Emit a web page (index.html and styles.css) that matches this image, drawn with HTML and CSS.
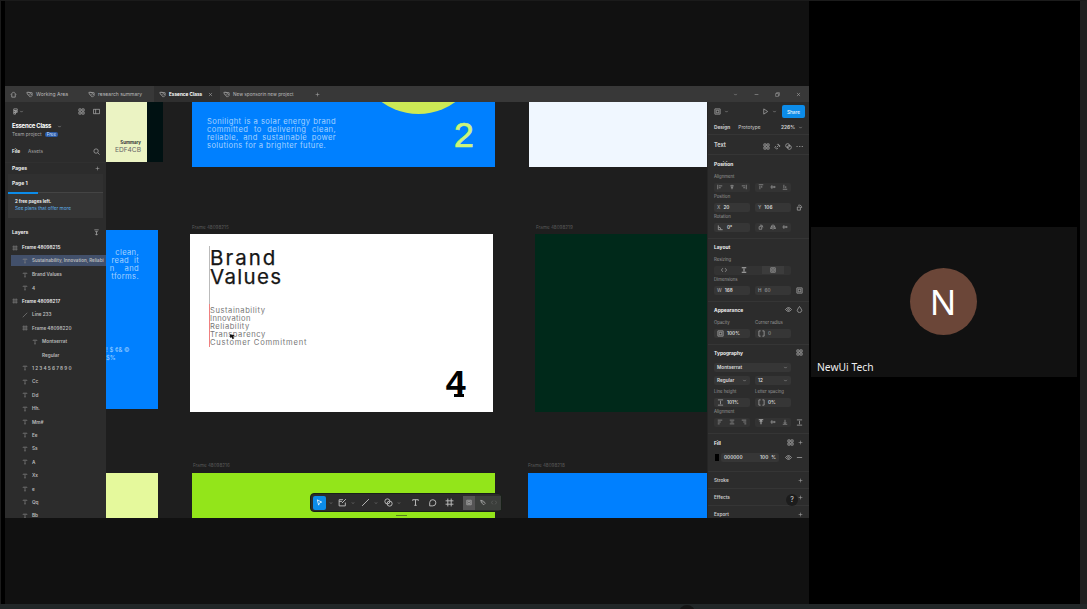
FILE: index.html
```html
<!DOCTYPE html>
<html lang="en">
<head>
    <meta charset="UTF-8">
    <meta name="viewport" content="width=device-width, initial-scale=1.0">
    <title>Essence Class</title>
    <link rel="stylesheet" href="styles.css">
</head>
<body>
<!-- Icon set -->
<svg class="sprite" viewBox="0 0 16 16">
    <symbol id="home" viewBox="0 0 16 16"><path d="M2 8l6-6 6 6M4 7v7h8V7"/></symbol>
    <symbol id="file" viewBox="0 0 16 16"><path d="M2 3h5l7 7-4 4-7-7zM6 3l8 1v5M6 7l3 3"/></symbol>
    <symbol id="figma" viewBox="0 0 16 16"><path d="M4 2h8v4H4zM4 6h4v4H4zM4 10h4v4H4zM9 7h3v3H9z"/></symbol>
    <symbol id="down" viewBox="0 0 16 16"><path d="M4 6l4 4 4-4"/></symbol>
    <symbol id="plus" viewBox="0 0 16 16"><path d="M8 2v12M2 8h12"/></symbol>
    <symbol id="minus" viewBox="0 0 16 16"><path d="M2 8h12"/></symbol>
    <symbol id="close" viewBox="0 0 16 16"><path d="M3 3l10 10M13 3L3 13"/></symbol>
    <symbol id="window" viewBox="0 0 16 16"><path d="M2 5h9v9H2zM5 5V2h9v9h-3"/></symbol>
    <symbol id="grid" viewBox="0 0 16 16"><path d="M2 2h5v5H2zM9 2h5v5H9zM2 9h5v5H2zM9 9h5v5H9z"/></symbol>
    <symbol id="panel" viewBox="0 0 16 16"><path d="M1 3h14v10H1zM6 3v10"/></symbol>
    <symbol id="search" viewBox="0 0 16 16"><circle cx="7" cy="7" r="5"/><path d="M11 11l4 4"/></symbol>
    <symbol id="collapse" viewBox="0 0 16 16"><path d="M3 2h10M5 6h6M8 6v8M5 11l3 3 3-3"/></symbol>
    <symbol id="frame" viewBox="0 0 16 16"><path d="M5 1v14M11 1v14M1 5h14M1 11h14"/></symbol>
    <symbol id="text" viewBox="0 0 16 16"><path d="M3 5V3h10v2M8 3v10M6 13h4"/></symbol>
    <symbol id="line" viewBox="0 0 16 16"><path d="M2 14L14 2"/></symbol>
    <symbol id="link" viewBox="0 0 16 16"><path d="M6 10l5-5M7 4l2-2 5 5-3 2M9 12l-3 2-4-4 2-3"/></symbol>
    <symbol id="play" viewBox="0 0 16 16"><path d="M4 2l9 6-9 6z"/></symbol>
    <symbol id="cursor" viewBox="0 0 16 16"><path d="M3 2l10 5-5 2-2 5z"/></symbol>
    <symbol id="shape" viewBox="0 0 16 16"><path d="M9 3H2v11h11V8M2 6h5M7 9l7-7"/></symbol>
    <symbol id="pen" viewBox="0 0 16 16"><path d="M2 2l7 2 5 6-4 4-6-5zM2 2l7 7"/></symbol>
    <symbol id="blend" viewBox="0 0 16 16"><circle cx="6" cy="6" r="4.500"/><circle cx="10" cy="10" r="4.500"/></symbol>
    <symbol id="comment" viewBox="0 0 16 16"><path d="M3 14V8a5.500 5.500 0 1 1 5.500 6z"/></symbol>
    <symbol id="eye" viewBox="0 0 16 16"><path d="M1 8q7-9 14 0q-7 9-14 0z"/><circle cx="8" cy="8" r="2"/></symbol>
    <symbol id="drop" viewBox="0 0 16 16"><path d="M8 1l4 6a5 5 0 1 1-8 0z"/></symbol>
    <symbol id="left" viewBox="0 0 16 16"><path d="M2 3h12M2 8h8M2 13h5"/></symbol>
    <symbol id="center" viewBox="0 0 16 16"><path d="M2 3h12M4 8h8M2 13h12"/></symbol>
    <symbol id="right" viewBox="0 0 16 16"><path d="M2 3h12M6 8h8M9 13h5"/></symbol>
    <symbol id="al-l" viewBox="0 0 16 16"><path d="M2 2v12M5 5h9M5 10h5"/></symbol>
    <symbol id="al-c" viewBox="0 0 16 16"><path d="M8 2v12M3 5h10M5 10h6"/></symbol>
    <symbol id="al-r" viewBox="0 0 16 16"><path d="M14 2v12M2 5h9M6 10h5"/></symbol>
    <symbol id="al-t" viewBox="0 0 16 16"><path d="M2 2h12M5 5v9M10 5v5"/></symbol>
    <symbol id="al-m" viewBox="0 0 16 16"><path d="M1 8h14M5 3v10M11 5v6"/></symbol>
    <symbol id="al-b" viewBox="0 0 16 16"><path d="M2 14h12M5 2v9M10 6v5"/></symbol>
    <symbol id="angle" viewBox="0 0 16 16"><path d="M3 3v10h10M3 7q6 0 6 6"/></symbol>
    <symbol id="flip" viewBox="0 0 16 16"><path d="M8 1v14M5 4v8H1zM11 4v8h4z"/></symbol>
    <symbol id="rotate" viewBox="0 0 16 16"><path d="M3 7h7v7H3zM5 3q8-2 8 6"/></symbol>
    <symbol id="box" viewBox="0 0 16 16"><path d="M2 2h12v12H2zM5 5h6v6H5z"/></symbol>
    <symbol id="corners" viewBox="0 0 16 16"><path d="M6 2H2v12h4M10 2h4v12h-4"/></symbol>
    <symbol id="height" viewBox="0 0 16 16"><path d="M2 2h12M2 14h12M8 4v8"/></symbol>
    <symbol id="top" viewBox="0 0 16 16"><path d="M2 2h12M8 4v10M5 7l3-3 3 3"/></symbol>
    <symbol id="bottom" viewBox="0 0 16 16"><path d="M2 14h12M8 2v10M5 9l3 3 3-3"/></symbol>
    <symbol id="dots" viewBox="0 0 16 16"><path d="M1 8h3M7 8h3M13 8h3"/></symbol>
    <symbol id="code" viewBox="0 0 16 16"><path d="M5 3L1 8l4 5M11 3l4 5-4 5"/></symbol>
</svg>

<main class="call">
    <section class="share">
        <div class="window">
            <!-- Tabs -->
            <header class="tabbar">
                <div class="tab tab-home"><svg><use href="#home"/></svg></div>
                <div class="tab tab-one"><svg><use href="#file"/></svg><span>Working Area</span></div>
                <div class="tab tab-two"><svg><use href="#file"/></svg><span>research summary</span></div>
                <div class="tab tab-active"><svg><use href="#file"/></svg><span>Essence Class</span><svg class="small"><use href="#close"/></svg></div>
                <div class="tab tab-last"><svg><use href="#file"/></svg><span>New sponsorin new project</span></div>
                <svg class="small"><use href="#plus"/></svg>
                <div class="controls">
                    <svg class="small"><use href="#down"/></svg>
                    <svg class="small"><use href="#minus"/></svg>
                    <svg class="small"><use href="#window"/></svg>
                    <svg class="small"><use href="#close"/></svg>
                </div>
            </header>

            <div class="editor">
                <!-- Left panel -->
                <aside class="left">
                    <div class="bar menu">
                        <svg><use href="#figma"/></svg><svg class="small"><use href="#down"/></svg>
                        <svg class="push"><use href="#grid"/></svg><svg><use href="#panel"/></svg>
                    </div>
                    <div class="bar filename">Essence Class <svg class="small"><use href="#down"/></svg></div>
                    <div class="bar project">Team project <span class="badge">Free</span></div>
                    <div class="bar nav"><b>File</b><span>Assets</span><svg class="push"><use href="#search"/></svg></div>
                    <div class="bar pages"><b>Pages</b><svg class="push small"><use href="#plus"/></svg></div>
                    <div class="bar page"><b>Page 1</b></div>
                    <div class="quota">
                        <div class="progress"></div>
                        <p>2 free pages left.</p>
                        <a>See plans that offer more</a>
                    </div>
                    <div class="bar layers-title"><b>Layers</b><svg class="push"><use href="#collapse"/></svg></div>
                    <ul class="layers">
                        <li class="root"><svg><use href="#frame"/></svg>Frame 48098215</li>
                        <li class="selected"><svg><use href="#text"/></svg>Sustainability, Innovation, Reliabi</li>
                        <li><svg><use href="#text"/></svg>Brand Values</li>
                        <li><svg><use href="#text"/></svg>4</li>
                        <li class="root"><svg><use href="#frame"/></svg>Frame 48098217</li>
                        <li><svg><use href="#line"/></svg>Line 233</li>
                        <li><svg><use href="#frame"/></svg>Frame 48098220</li>
                        <li class="deep"><svg><use href="#text"/></svg>Montserrat</li>
                        <li class="deep"><svg></svg>Regular</li>
                        <li class="digits"><svg><use href="#text"/></svg>1234567890</li>
                        <li><svg><use href="#text"/></svg>Cc</li>
                        <li><svg><use href="#text"/></svg>Dd</li>
                        <li><svg><use href="#text"/></svg>Hh.</li>
                        <li><svg><use href="#text"/></svg>Mm#</li>
                        <li><svg><use href="#text"/></svg>Ee</li>
                        <li><svg><use href="#text"/></svg>Ss</li>
                        <li><svg><use href="#text"/></svg>A</li>
                        <li><svg><use href="#text"/></svg>Xx</li>
                        <li><svg><use href="#text"/></svg>e</li>
                        <li><svg><use href="#text"/></svg>Qq</li>
                        <li><svg><use href="#text"/></svg>Bb</li>
                    </ul>
                </aside>

                <!-- Canvas -->
                <div class="canvas">
                    <div class="artboard cream"><div class="swatch"><b>Summary</b><span>EDF4CB</span></div></div>
                    <div class="artboard about">
                        <div class="sun"></div>
                        <p>Sonilight is a solar energy brand committed to delivering clean, reliable, and sustainable power solutions for a brighter future.</p>
                        <span class="number">2</span>
                    </div>
                    <div class="artboard pale"></div>

                    <div class="artboard blue">
                        <div class="cut"><span>clean,</span><span>read&nbsp; it</span><span>n &nbsp; &nbsp;and</span><span>tforms.</span></div>
                        <div class="glyphs">! $ ¢&amp; ©<br>$%</div>
                    </div>
                    <span class="label label-values">Frame 48098215</span>
                    <div class="artboard values">
                        <h1><span class="brand">Brand</span><span>Values</span></h1>
                        <ul>
                            <li class="w1">Sustainability</li>
                            <li class="w2">Innovation</li>
                            <li class="w3">Reliability</li>
                            <li class="w4">Transparency</li>
                            <li class="w5">Customer Commitment</li>
                        </ul>
                        <div class="guide"></div>
                        <svg class="pointer" viewBox="0 0 10 10"><path d="M1 2l7 1-2 2 1 3-2 1-1-3-2 1z"/></svg>
                        <span class="number">4</span>
                    </div>
                    <span class="label label-green">Frame 48098219</span>
                    <div class="artboard green"></div>

                    <div class="artboard lemon"></div>
                    <span class="label label-lime">Frame 48098216</span>
                    <div class="artboard lime"></div>
                    <span class="label label-azure">Frame 48098218</span>
                    <div class="artboard azure"></div>

                    <div class="toolbar">
                        <div class="tool active"><svg><use href="#cursor"/></svg></div><svg class="small"><use href="#down"/></svg>
                        <svg><use href="#shape"/></svg><svg class="small"><use href="#down"/></svg>
                        <svg><use href="#line"/></svg><svg class="small"><use href="#down"/></svg>
                        <svg><use href="#blend"/></svg><svg class="small"><use href="#down"/></svg>
                        <svg class="wide"><use href="#text"/></svg>
                        <svg class="wide"><use href="#comment"/></svg>
                        <svg class="wide"><use href="#frame"/></svg>
                        <div class="modes"><span><svg><use href="#box"/></svg></span><svg><use href="#pen"/></svg><svg><use href="#code"/></svg></div>
                    </div>
                    <div class="handle"></div>
                </div>

                <!-- Right panel -->
                <aside class="right">
                    <div class="row head"><svg><use href="#box"/></svg><svg class="small"><use href="#down"/></svg><svg class="push"><use href="#play"/></svg><svg class="small"><use href="#down"/></svg><button>Share</button></div>
                    <div class="row modes-row"><b>Design</b><span>Prototype</span><b class="push">226%</b><svg class="small"><use href="#down"/></svg></div>
                    <div class="row kind"><b>Text</b><svg class="push"><use href="#grid"/></svg><svg><use href="#link"/></svg><svg><use href="#blend"/></svg><svg><use href="#dots"/></svg></div>

                    <section>
                        <h2>Position</h2>
                        <div class="row caption">Alignment</div>
                        <div class="row pair"><div class="group"><svg><use href="#al-l"/></svg><svg><use href="#al-c"/></svg><svg><use href="#al-r"/></svg></div><div class="group"><svg><use href="#al-t"/></svg><svg><use href="#al-m"/></svg><svg><use href="#al-b"/></svg></div></div>
                        <div class="row caption">Position</div>
                        <div class="row pair"><div class="field"><i>X</i>20</div><div class="field"><i>Y</i>106</div><svg><use href="#rotate"/></svg></div>
                        <div class="row caption">Rotation</div>
                        <div class="row pair"><div class="field"><svg><use href="#angle"/></svg>0°</div><div class="group"><svg><use href="#rotate"/></svg><svg><use href="#flip"/></svg><svg><use href="#al-m"/></svg></div></div>
                    </section>

                    <section>
                        <h2>Layout</h2>
                        <div class="row caption">Resizing</div>
                        <div class="row"><div class="group resize"><svg><use href="#code"/></svg><svg class="bright"><use href="#height"/></svg><span><svg><use href="#box"/></svg></span></div></div>
                        <div class="row caption">Dimensions</div>
                        <div class="row pair"><div class="field"><i>W</i>168</div><div class="field dim"><i>H</i>60</div><svg><use href="#box"/></svg></div>
                    </section>

                    <section>
                        <div class="row title"><h2>Appearance</h2><svg class="push"><use href="#eye"/></svg><svg><use href="#drop"/></svg></div>
                        <div class="row caption pair"><span>Opacity</span><span>Corner radius</span></div>
                        <div class="row pair"><div class="field"><svg><use href="#box"/></svg>100%</div><div class="field dim"><svg><use href="#corners"/></svg>0</div></div>
                    </section>

                    <section>
                        <div class="row title"><h2>Typography</h2><svg class="push"><use href="#grid"/></svg></div>
                        <div class="row tall"><div class="field full">Montserrat<svg class="push small"><use href="#down"/></svg></div></div>
                        <div class="row pair tall"><div class="field">Regular<svg class="push small"><use href="#down"/></svg></div><div class="field">12<svg class="push small"><use href="#down"/></svg></div></div>
                        <div class="row caption pair"><span>Line height</span><span>Letter spacing</span></div>
                        <div class="row pair"><div class="field"><svg><use href="#height"/></svg>101%</div><div class="field"><svg><use href="#corners"/></svg>0%</div></div>
                        <div class="row caption">Alignment</div>
                        <div class="row pair"><div class="group"><svg><use href="#left"/></svg><svg><use href="#center"/></svg><svg><use href="#right"/></svg></div><div class="group"><svg class="bright"><use href="#top"/></svg><svg><use href="#al-m"/></svg><svg><use href="#bottom"/></svg></div><svg><use href="#height"/></svg></div>
                    </section>

                    <section class="fill">
                        <div class="row title"><h2>Fill</h2><svg class="push"><use href="#grid"/></svg><svg class="small"><use href="#plus"/></svg></div>
                        <div class="row tall"><span class="chip"></span><div class="field color">000000<span class="push">100</span><span>%</span></div><svg class="push"><use href="#eye"/></svg><svg><use href="#minus"/></svg></div>
                    </section>
                    <div class="row extra">Stroke<svg class="push small"><use href="#plus"/></svg></div>
                    <div class="row extra">Effects<svg class="push small"><use href="#plus"/></svg></div>
                    <div class="row extra">Export<svg class="push small"><use href="#plus"/></svg></div>
                    <div class="help">?</div>
                </aside>
            </div>
        </div>
    </section>

    <aside class="people">
        <div class="tile">
            <div class="avatar">N</div>
            <span class="name">NewUi Tech</span>
        </div>
    </aside>
</main>
<footer class="strip"><div class="knob"></div></footer>
</body>
</html>
```
FILE: styles.css
```css
* {
    box-sizing: border-box;
}

body {
    margin: 0;
    width: 1087px;
    height: 609px;
    overflow: hidden;
    background-color: #000;
    color: #ddd;
    font-family: Inter, sans-serif;
    font-size: 5px;
    line-height: 1;
}

h1, h2, p, ul {
    margin: 0;
    padding: 0;
}

ul {
    list-style: none;
}

svg {
    width: 7px;
    height: 7px;
    flex: none;
    fill: none;
    stroke: #aaa;
    stroke-width: 1.7;
}

svg.small {
    width: 5px;
    height: 5px;
}

.sprite {
    display: none;
}

.push {
    margin-left: auto;
}

.call {
    display: flex;
    height: 604px;
    border-top: 1px solid #1b1b1b;
    border-left: 1px solid #1b1b1b;
    border-right: 7px solid #1f1f1f;
}

.share {
    width: 804px;
    margin-left: 4px;
    padding-top: 85px;
    background-color: #111;
}

.window {
    height: 432px;
    background-color: #2c2c2c;
}

/* Tabs */
.tabbar {
    display: flex;
    align-items: center;
    height: 16px;
    background-color: #383838;
    color: #bbb;
}

.tab {
    display: flex;
    align-items: center;
    gap: 3px;
    height: 16px;
    white-space: nowrap;
}

.tab-home {
    width: 21px;
    padding-left: 5px;
}

.tab-one {
    width: 62px;
}

.tab-two {
    width: 66px;
}

.tab-active {
    width: 66px;
    padding-left: 5px;
    background-color: #2f2f2f;
    color: #fff;
    font-weight: bold;
    font-size: 4.7px;
}

.tab-active .small {
    margin-left: 3px;
}

.tab-last {
    width: 95px;
    padding-left: 3px;
    font-size: 4.7px;
}

.controls {
    display: flex;
    gap: 16px;
    margin-left: auto;
    padding-right: 8px;
}

.editor {
    display: grid;
    grid-template-columns: 101px 601px 102px;
    height: 416px;
}

/* Left panel */
.left {
    height: 416px;
    overflow: hidden;
    background-color: #2c2c2c;
}

.bar {
    display: flex;
    align-items: center;
    padding: 0 6px 0 7px;
}

.menu {
    height: 19px;
    gap: 8px;
}

.menu .small {
    margin-left: -8px;
}

.filename {
    height: 10px;
    gap: 6px;
    color: #fff;
    font-size: 6px;
    font-weight: bold;
    letter-spacing: -0.25px;
}

.project {
    height: 7px;
    gap: 3px;
    color: #aaa;
    font-size: 4.8px;
}

.badge {
    padding: 0 2px;
    border-radius: 2px;
    background-color: #2b5aa5;
    color: #cfe0ff;
    font-size: 4.5px;
    line-height: 5px;
}

.nav {
    height: 25px;
    gap: 8px;
    border-bottom: 1px solid #303030;
    color: #aaa;
    padding-top: 2px;
    font-size: 4.7px;
}

.nav b, .pages b, .page b, .layers-title b {
    color: #eee;
}

.pages {
    height: 11px;
}

.page {
    height: 18px;
    margin: 0 3px;
    padding-left: 4px;
    background-color: #303030;
}

.quota {
    height: 26px;
    margin: 0 3px;
    border-top: 1px solid #444;
    background-color: #353535;
}

.progress {
    width: 30px;
    height: 2px;
    margin-top: -1px;
    background-color: #0c8ce9;
}

.quota p {
    margin: 6px 0 2px 7px;
    color: #eee;
    font-weight: bold;
    font-size: 4.4px;
}

.quota a {
    margin-left: 7px;
    color: #5fb0e8;
    font-size: 4.7px;
    display: block;
}

.layers-title {
    height: 23px;
    padding-top: 6px;
}

.layers {
    color: #bbb;
}

.layers li {
    display: flex;
    align-items: center;
    gap: 4px;
    height: 13.42px;
    padding-left: 17px;
    overflow: hidden;
    white-space: nowrap;
    font-weight: 600;
    font-size: 4.7px;
}

.layers svg {
    width: 6px;
    height: 6px;
    stroke: #888;
}

.layers .root {
    padding-left: 7px;
    color: #eee;
}

.layers .deep {
    padding-left: 27px;
}

.layers .digits {
    letter-spacing: 1.2px;
}

.layers .selected {
    height: 11px;
    margin: 1px 0 1.42px 6px;
    padding-left: 11px;
    background-color: #42506b;
    font-size: 4.5px;
}

/* Canvas */
.canvas {
    position: relative;
    overflow: hidden;
    background-color: #1e1e1e;
}

.artboard {
    position: absolute;
}

.label {
    position: absolute;
    color: #5a5a5a;
    font-size: 4.6px;
}

.label-values {
    left: 86px;
    top: 124px;
}

.label-green {
    left: 430px;
    top: 124px;
}

.label-lime {
    left: 87px;
    top: 362px;
}

.label-azure {
    left: 422px;
    top: 362px;
}

.cream {
    left: 0;
    top: 0;
    width: 57px;
    height: 60px;
    background-color: #001112;
}

.swatch {
    display: flex;
    flex-direction: column;
    align-items: flex-end;
    gap: 2px;
    width: 41px;
    height: 60px;
    padding: 39px 6px 0 0;
    background-color: #ebf3c3;
    color: #333;
    font-size: 4.4px;
}

.swatch span {
    color: #666;
    font-size: 6.6px;
}

.about {
    left: 86px;
    top: 0;
    width: 303px;
    height: 65px;
    overflow: hidden;
    background-color: #0080ff;
}

.about p {
    width: 129px;
    margin: 16px 0 0 15px;
    color: #a5d2ff;
    font-size: 7.6px;
    line-height: 8px;
    letter-spacing: 0.38px;
    text-align: justify;
}

.sun {
    position: absolute;
    left: 164px;
    top: -113px;
    width: 125px;
    height: 125px;
    border-radius: 50%;
    background-color: #cdea55;
}

.number {
    position: absolute;
    font-family: "Liberation Mono", monospace;
    font-size: 36px;
    line-height: 36px;
}

.about .number {
    left: 261px;
    top: 18px;
    color: #cdf57a;
    -webkit-text-stroke: 0.6px #cdf57a;
}

.pale {
    left: 423px;
    top: 0;
    width: 178px;
    height: 65px;
    background-color: #f0f7ff;
}

.blue {
    left: 0;
    top: 128px;
    width: 52px;
    height: 179px;
    overflow: hidden;
    background-color: #0080ff;
    color: #a5d2ff;
}

.cut {
    display: flex;
    flex-direction: column;
    align-items: flex-end;
    width: 33px;
    padding-top: 19px;
    font-size: 7.6px;
    line-height: 8px;
    letter-spacing: 0.35px;
    white-space: nowrap;
}

.glyphs {
    margin-top: 65px;
    font-size: 6px;
    line-height: 8px;
    white-space: nowrap;
}

.values {
    left: 84px;
    top: 132px;
    width: 303px;
    height: 178px;
    padding: 14px 0 0 20px;
    background-color: #fff;
    color: #161616;
}

.values h1 {
    display: flex;
    flex-direction: column;
    font-size: 20.5px;
    font-weight: 400;
    line-height: 19px;
    letter-spacing: 1.3px;
    -webkit-text-stroke: 0.25px #161616;
}

.values .brand {
    letter-spacing: 2px;
}

.values ul {
    margin-top: 21px;
    color: #777;
    font-size: 7.6px;
    line-height: 8px;
}

.w1, .w4 {
    letter-spacing: 0.55px;
}

.w2 {
    letter-spacing: 0.35px;
}

.w3 {
    letter-spacing: 0.5px;
}

.w5 {
    letter-spacing: 0.75px;
}

.guide {
    position: absolute;
    left: 19px;
    top: 12px;
    width: 1px;
    height: 101px;
    background: linear-gradient(#bbb 0 58px, #f08080 58px);
}

.pointer {
    position: absolute;
    left: 39px;
    top: 99px;
    fill: #111;
    stroke: none;
}

.values .number {
    left: 255px;
    top: 134px;
    font-weight: bold;
    color: #000;
}

/* slab foot of the page number */
.values .number::after {
    content: "";
    position: absolute;
    left: 9px;
    bottom: 7px;
    width: 10px;
    height: 3px;
    background-color: #000;
}

.green {
    left: 429px;
    top: 132px;
    width: 172px;
    height: 178px;
    background-color: #00291a;
}

.lemon {
    left: 0;
    top: 371px;
    width: 52px;
    height: 45px;
    background-color: #e5f99c;
}

.lime {
    left: 86px;
    top: 371px;
    width: 303px;
    height: 45px;
    background-color: #93e51a;
}

.azure {
    left: 422px;
    top: 371px;
    width: 179px;
    height: 45px;
    background-color: #0080ff;
}

.toolbar {
    position: absolute;
    left: 204px;
    top: 391px;
    display: flex;
    align-items: center;
    width: 192px;
    height: 19px;
    padding-left: 2px;
    border: 1px solid #182018;
    border-radius: 4px;
    background-color: #2c2c2c;
}

.toolbar svg {
    width: 9px;
    height: 9px;
    stroke: #bbb;
}

.toolbar > .small {
    width: 4px;
    height: 4px;
    margin: 0 6px 0 4px;
}

.toolbar > .active + .small {
    margin: 0 5px 0 3px;
}

.tool {
    display: flex;
    align-items: center;
    justify-content: center;
    width: 13px;
    height: 14px;
    border-radius: 2px;
    background-color: #0c8ce9;
}

.tool svg {
    stroke: #fff;
    width: 7px;
}

.toolbar > .wide {
    margin: 0 4px;
}

.modes {
    display: flex;
    align-items: center;
    gap: 5px;
    height: 14px;
    margin-left: auto;
    padding-right: 4px;
    background-color: #3b3e3b;
}

.modes span {
    display: flex;
    align-items: center;
    height: 14px;
    padding: 0 3px;
    background-color: #555;
}

.modes svg {
    width: 6px;
    height: 7px;
}

.modes > svg:last-child {
    stroke: #666;
}

.handle {
    position: absolute;
    left: 290px;
    top: 413px;
    width: 11px;
    height: 1px;
    background-color: #57801c;
}

/* Right panel */
.right {
    position: relative;
    height: 416px;
    overflow: hidden;
    background-color: #2c2c2c;
    border-left: 1px solid #252525;
    color: #ccc;
}

.row {
    display: flex;
    align-items: center;
    gap: 4px;
    height: 10px;
    padding: 0 6px;
}

.head {
    height: 19px;
    gap: 3px;
}

.head button {
    width: 23px;
    height: 13px;
    margin-left: 2px;
    margin-right: -2px;
    padding: 0;
    border: none;
    border-radius: 2px;
    background-color: #0c8ce9;
    color: #fff;
    font-family: inherit;
    font-size: 4.8px;
}

.modes-row {
    height: 13px;
    gap: 8px;
    font-size: 4.8px;
}

.modes-row .small {
    margin-left: -5px;
}

.kind {
    height: 21px;
    padding-top: 3px;
    border-top: 1px solid #353535;
    border-bottom: 1px solid #353535;
}

.kind b {
    font-size: 5.6px;
}

.right section {
    padding-bottom: 6px;
    border-bottom: 1px solid #353535;
    margin-bottom: -1px;
}

.right .fill {
    padding: 1px 0 7px;
    margin-bottom: 0;
}

h2 {
    height: 17px;
    padding: 1px 0 0 6px;
    color: #eee;
    font-size: 4.9px;
    line-height: 17px;
}

.title {
    height: 17px;
}

.title h2 {
    padding-left: 0;
}

.caption {
    color: #999;
    font-size: 4.3px;
}

.tall {
    height: 13px;
}

.pair {
    display: grid;
    grid-template-columns: 36px 36px 7px;
    gap: 5px;
}

.group {
    display: flex;
    align-items: center;
    justify-content: space-around;
    height: 9px;
    border-radius: 2px;
    background-color: #333;
}

.group svg {
    width: 6px;
    height: 6px;
}

svg.bright {
    stroke: #fff;
}

.resize {
    width: 77px;
}

.resize span {
    display: flex;
    padding: 1px 8px;
    background-color: #3c3c3c;
}

.field {
    display: flex;
    align-items: center;
    gap: 3px;
    height: 9px;
    padding: 0 3px;
    border-radius: 2px;
    background-color: #363636;
    color: #ddd;
    font-weight: 600;
    font-size: 4.7px;
}

.field i {
    color: #999;
    font-style: normal;
}

.dim {
    color: #888;
}

.full {
    width: 77px;
}

.color {
    width: 58px;
}

.chip {
    width: 4px;
    height: 7px;
    background-color: #000;
    margin-right: -2px;
    margin-left: 1px;
}

.extra {
    height: 17px;
    border-bottom: 1px solid #353535;
    font-weight: 600;
    font-size: 4.7px;
}

.help {
    position: absolute;
    left: 78px;
    top: 392px;
    width: 12px;
    height: 12px;
    border-radius: 50%;
    background-color: #1c1c1c;
    color: #ddd;
    font-size: 7px;
    line-height: 12px;
    text-align: center;
}

/* Participants */
.people {
    display: flex;
    align-items: center;
    width: 271px;
    padding: 0 0 2px 2px;
}

.tile {
    position: relative;
    display: flex;
    align-items: center;
    justify-content: center;
    width: 266px;
    height: 150px;
    padding-right: 2px;
    background-color: #111;
}

.avatar {
    width: 67px;
    height: 67px;
    border-radius: 50%;
    background-color: #6b4638;
    color: #fff;
    font-family: "Noto Sans", sans-serif;
    font-size: 35px;
    line-height: 67px;
    text-align: center;
}

.name {
    position: absolute;
    left: 6px;
    bottom: 4px;
    color: #eee;
    font-family: "Noto Sans", sans-serif;
    font-size: 10.3px;
    line-height: 12px;
}

.strip {
    display: flex;
    height: 5px;
    overflow: hidden;
    background-color: #222728;
}

.knob {
    width: 16px;
    height: 16px;
    margin: 1px 0 0 679px;
    flex: none;
    border-radius: 50%;
    background-color: #151515;
}
```
